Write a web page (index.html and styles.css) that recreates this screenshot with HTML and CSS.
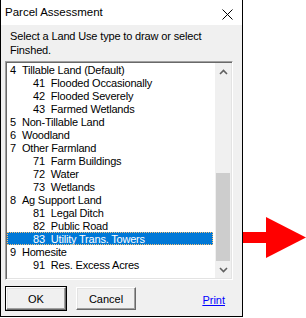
FILE: index.html
```html
<!DOCTYPE html>
<html>
<head>
	<meta charset="utf-8">
	<title>Parcel Assessment</title>
	<link rel="stylesheet" href="styles.css">
</head>
<body>
	<div class="dialog">
		<div class="titlebar">
			<span class="title">Parcel Assessment</span>
			<svg class="close" width="11" height="11" viewBox="0 0 11 11">
				<path d="M0.5 0.5 L10.5 10.5 M10.5 0.5 L0.5 10.5" stroke="#000" stroke-width="1" fill="none"/>
			</svg>
		</div>

		<p class="prompt">Select a Land Use type to draw or select Finshed.</p>

		<div class="listbox">
			<ul class="items">
				<li class="row"><span class="code">4</span>Tillable Land (Default)</li>
				<li class="row sub"><span class="code">41</span>Flooded Occasionally</li>
				<li class="row sub"><span class="code">42</span>Flooded Severely</li>
				<li class="row sub"><span class="code">43</span>Farmed Wetlands</li>
				<li class="row"><span class="code">5</span>Non-Tillable Land</li>
				<li class="row"><span class="code">6</span>Woodland</li>
				<li class="row"><span class="code">7</span>Other Farmland</li>
				<li class="row sub"><span class="code">71</span>Farm Buildings</li>
				<li class="row sub"><span class="code">72</span>Water</li>
				<li class="row sub"><span class="code">73</span>Wetlands</li>
				<li class="row"><span class="code">8</span>Ag Support Land</li>
				<li class="row sub"><span class="code">81</span>Legal Ditch</li>
				<li class="row sub"><span class="code">82</span>Public Road</li>
				<li class="row sub selected"><span class="code">83</span>Utility Trans. Towers</li>
				<li class="row"><span class="code">9</span>Homesite</li>
				<li class="row sub"><span class="code">91</span>Res. Excess Acres</li>
			</ul>
			<div class="scrollbar">
				<div class="arrow">
					<svg width="9" height="6" viewBox="0 0 9 6"><path d="M1 5 L4.5 1.5 L8 5" stroke="#606060" stroke-width="1.6" fill="none"/></svg>
				</div>
				<div class="track"><div class="thumb"></div></div>
				<div class="arrow">
					<svg width="9" height="6" viewBox="0 0 9 6"><path d="M1 1 L4.5 4.5 L8 1" stroke="#606060" stroke-width="1.6" fill="none"/></svg>
				</div>
			</div>
		</div>

		<div class="actions">
			<button class="btn default">OK</button>
			<button class="btn">Cancel</button>
			<a class="print" href="#">Print</a>
		</div>
	</div>

	<svg class="pointer" width="63" height="41" viewBox="0 0 63 41">
		<rect x="0" y="15" width="25" height="11" fill="#ff0000"/>
		<polygon points="23,0 63,20.5 23,41" fill="#ff0000"/>
	</svg>
</body>
</html>
```

FILE: styles.css
```css
/* dialog window */
*{
	margin: 0;
	padding: 0;
	box-sizing: border-box;
}
body{
	background: #fff;
	display: flex;
	align-items: flex-start;
	font-family: "Liberation Sans", Arial, sans-serif;
	font-size: 11px;
	color: #000;
}
.dialog{
	width: 243px;
	height: 317px;
	border: 1px solid #000;
	border-top: none;
	background: #f0f0f0;
	display: flex;
	flex-direction: column;
}
.titlebar{
	height: 25px;
	background: #fff;
	display: flex;
	justify-content: space-between;
	align-items: center;
	padding: 0 9px 0 4px;
}
.title{
	font-size: 11.5px;
	line-height: 25px;
}
.close{
	margin-top: 3px;
}
.prompt{
	margin: 4px 8px 0 9px;
	line-height: 14px;
	letter-spacing: -0.15px;
}

/* list box */
.listbox{
	margin: 4px 0 0 4px;
	width: 228px;
	height: 219px;
	background: #fff;
	border: 1px solid;
	border-color: #a0a0a0 #fff #fff #a0a0a0;
	box-shadow: inset 1px 1px 0 #696969, inset -1px -1px 0 #e3e3e3;
	padding: 1px;
	display: flex;
}
.items{
	list-style: none;
	flex: 1;
	padding-right: 2px;
}
.row{
	height: 13px;
	padding: 2px 0 0 3px;
	line-height: 11px;
	white-space: nowrap;
	letter-spacing: -0.2px;
}
.row.sub{
	padding-left: 26px;
}
.code{
	margin-right: 6px;
}
.selected{
	background: #0078d7;
	color: #fff;
	outline: 1px dotted #f5c27a;
	outline-offset: -1px;
}
.scrollbar{
	width: 16px;
	background: #f0f0f0;
	display: flex;
	flex-direction: column;
}
.arrow{
	height: 17px;
	display: flex;
	align-items: center;
	justify-content: center;
}
.track{
	flex: 1;
	display: flex;
	flex-direction: column;
	justify-content: flex-end;
	padding: 0 1px 0 1px;
}
.thumb{
	height: 88px;
	background: #cdcdcd;
}

/* buttons row */
.actions{
	display: flex;
	align-items: center;
	gap: 10px;
	margin: 7px 0 0 5px;
}
.btn{
	width: 60px;
	height: 23px;
	font-family: "Liberation Sans", Arial, sans-serif;
	font-size: 11px;
	color: #000;
	background: #f0f0f0;
	border: 1px solid;
	border-color: #fff #696969 #696969 #fff;
	box-shadow: inset -1px -1px 0 #a0a0a0, inset 1px 1px 0 #e3e3e3;
}
.btn.default{
	outline: 1px solid #000;
	outline-offset: 0;
	border-color: #fff #696969 #696969 #fff;
}
.print{
	margin: 2px 17px 0 auto;
	color: #0000ff;
	text-decoration: underline;
}
.pointer{
	margin-top: 217px;
}
```
